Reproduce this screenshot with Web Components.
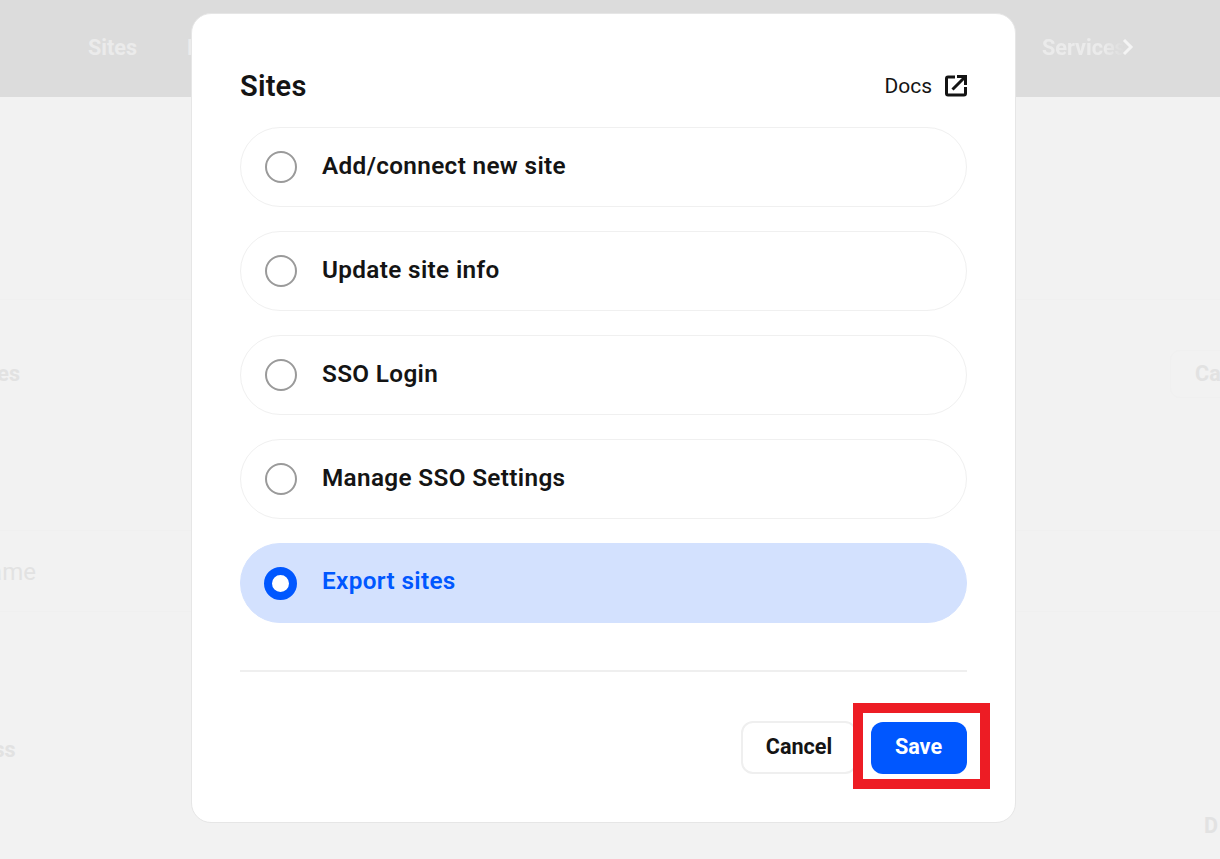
<!DOCTYPE html>
<html>
<head>
<meta charset="utf-8">
<style>
html, body { margin: 0; height: 100%; }
body { font-family: Roboto, "Liberation Sans", sans-serif; overflow: hidden; }
</style>
</head>
<body>
<sites-page>
  <site-dialog heading="Sites">
    <site-option label="Add/connect new site"></site-option>
    <site-option label="Update site info"></site-option>
    <site-option label="SSO Login"></site-option>
    <site-option label="Manage SSO Settings"></site-option>
    <site-option label="Export sites" selected></site-option>
  </site-dialog>
</sites-page>

<script>
// dimmed page behind the dialog
class SitesPage extends HTMLElement {
    constructor() {
        super();
        this.attachShadow({ mode: "open" }).innerHTML = `
        <style>
            :host { display: block; position: relative; width: 1220px; height: 859px; overflow: hidden; background: #f2f2f2; color: #e2e2e2; font-size: 21.6px; font-weight: 700; }
            header { height: 97px; background: #dcdcdc; color: #ebebeb; display: flex; align-items: center; padding: 0 86px 3px 88px; box-sizing: border-box; }
            header .gap { margin-left: 50px; }
            header .push { margin-left: auto; }
            header svg { margin-left: -2px; }
            .services { width: 82px; white-space: nowrap; overflow: hidden; -webkit-mask-image: linear-gradient(90deg, #000 75%, transparent 100%); mask-image: linear-gradient(90deg, #000 75%, transparent 100%); }
            .row { display: flex; justify-content: space-between; box-sizing: border-box; overflow: hidden; border-bottom: 1px solid #f0f0f0; }
            .blank { height: 203px; }
            .r2 { height: 231px; padding-top: 50px; line-height: 48px; }
            .r2 span:first-child { margin-left: -29px; }
            .ghost-btn { border: 1px solid #f0f0f0; border-radius: 10px; height: 48px; width: 100px; box-sizing: border-box; margin-right: -50px; padding-left: 24px; line-height: 46px; }
            .r3 { height: 81px; align-items: center; font-size: 24px; font-weight: 400; padding-top: 2px; }
            .r3 span { margin-left: -28px; }
            .r4 { height: 247px; display: block; border: 0; }
            .ss { margin: 125px 0 0 -38px; height: 26px; line-height: 26px; }
            .d { margin: 50px 0 0 1204px; height: 26px; line-height: 26px; }
        </style>
        <header>
            <span>Sites</span><span class="gap">D</span>
            <span class="push services">Services</span>
            <svg width="12" height="18" viewBox="0 0 12 18" fill="none" stroke="#f4f4f4" stroke-width="3"><path d="M2 2l7 7-7 7"/></svg>
        </header>
        <div class="row blank"></div>
        <div class="row r2"><span>Sites</span><span class="ghost-btn">Cancel</span></div>
        <div class="row r3"><span>Name</span></div>
        <div class="row r4"><div class="ss">Class</div><div class="d">D</div></div>
        <slot></slot>`;
    }
}
customElements.define("sites-page", SitesPage);

class SiteDialog extends HTMLElement {
    constructor() {
        super();
        this.attachShadow({ mode: "open" }).innerHTML = `
        <style>
            :host { display: block; position: absolute; left: 191px; top: 13px; width: 825px; height: 810px; box-sizing: border-box; padding: 48px 48px 0; background: #fff; border: 1px solid #e6e6e6; border-radius: 20px; color: #141414; font-weight: 400; }
            .title { display: flex; justify-content: space-between; align-items: center; box-sizing: border-box; height: 46px; margin-bottom: 19px; padding-top: 2px; }
            h2 { margin: 0; font-size: 29px; font-weight: 600; letter-spacing: .2px; }
            .docs { display: flex; align-items: center; gap: 13px; font-size: 21px; }
            .docs svg { display: block; }
            .list { display: flex; flex-direction: column; gap: 24px; }
            hr { border: 0; border-top: 2px solid #efefef; margin: 47px 0 49px; }
            .actions { display: flex; justify-content: flex-end; align-items: center; gap: 14px; position: relative; }
            button { font: inherit; font-size: 21.6px; font-weight: 700; border-radius: 12px; box-sizing: border-box; padding: 0 0 2px; }
            .cancel { width: 116px; height: 53px; background: #fff; color: #141414; border: 2px solid #efefef; }
            .save { width: 96px; height: 52px; background: #0057ff; color: #fff; border: 0; position: relative; z-index: 1; padding-right: 1px; }
            .mark { position: absolute; right: -23px; top: -18px; width: 137px; height: 86px; box-sizing: border-box; border: 10.5px solid #ed1c24; background: #fff; }
        </style>
        <div class="title">
            <h2></h2>
            <div class="docs">Docs
                <svg width="22" height="22" viewBox="0 0 22 22" fill="none" stroke="#141414" stroke-width="3"><path d="M10 2H3a1.500 1.500 0 0 0-1.500 1.500v15A1.500 1.500 0 0 0 3 20h16a1.500 1.500 0 0 0 1.500-1.500V12"/><path d="M7.500 14.500L20 2"/><path d="M12 1.500h8.500V10"/></svg>
            </div>
        </div>
        <div class="list"><slot></slot></div>
        <hr>
        <div class="actions">
            <button class="cancel">Cancel</button>
            <div class="mark"></div>
            <button class="save">Save</button>
        </div>`;
    }
    connectedCallback() {
        this.shadowRoot.querySelector("h2").textContent = this.getAttribute("heading");
    }
}
customElements.define("site-dialog", SiteDialog);

class SiteOption extends HTMLElement {
    constructor() {
        super();
        this.attachShadow({ mode: "open" }).innerHTML = `
        <style>
            :host { display: flex; align-items: center; gap: 25px; height: 80px; box-sizing: border-box; padding: 0 24px; border: 1px solid #f0f0f0; border-radius: 40px; font-size: 24.3px; font-weight: 600; letter-spacing: .35px; color: #141414; }
            :host([selected]) { background: #d3e1fe; border-color: #d3e1fe; color: #0057ff; }
            i { display: block; width: 32px; height: 32px; box-sizing: border-box; border: 2px solid #9a9a9a; border-radius: 50%; background: #fff; flex: none; }
            :host([selected]) i { width: 33px; height: 33px; margin-left: -1px; border: 8.5px solid #0057ff; }
            span { padding-bottom: 3px; }
            :host([selected]) span { padding-bottom: 5px; }
        </style>
        <i></i><span></span>`;
    }
    connectedCallback() {
        this.shadowRoot.querySelector("span").textContent = this.getAttribute("label");
    }
}
customElements.define("site-option", SiteOption);
</script>
</body>
</html>
